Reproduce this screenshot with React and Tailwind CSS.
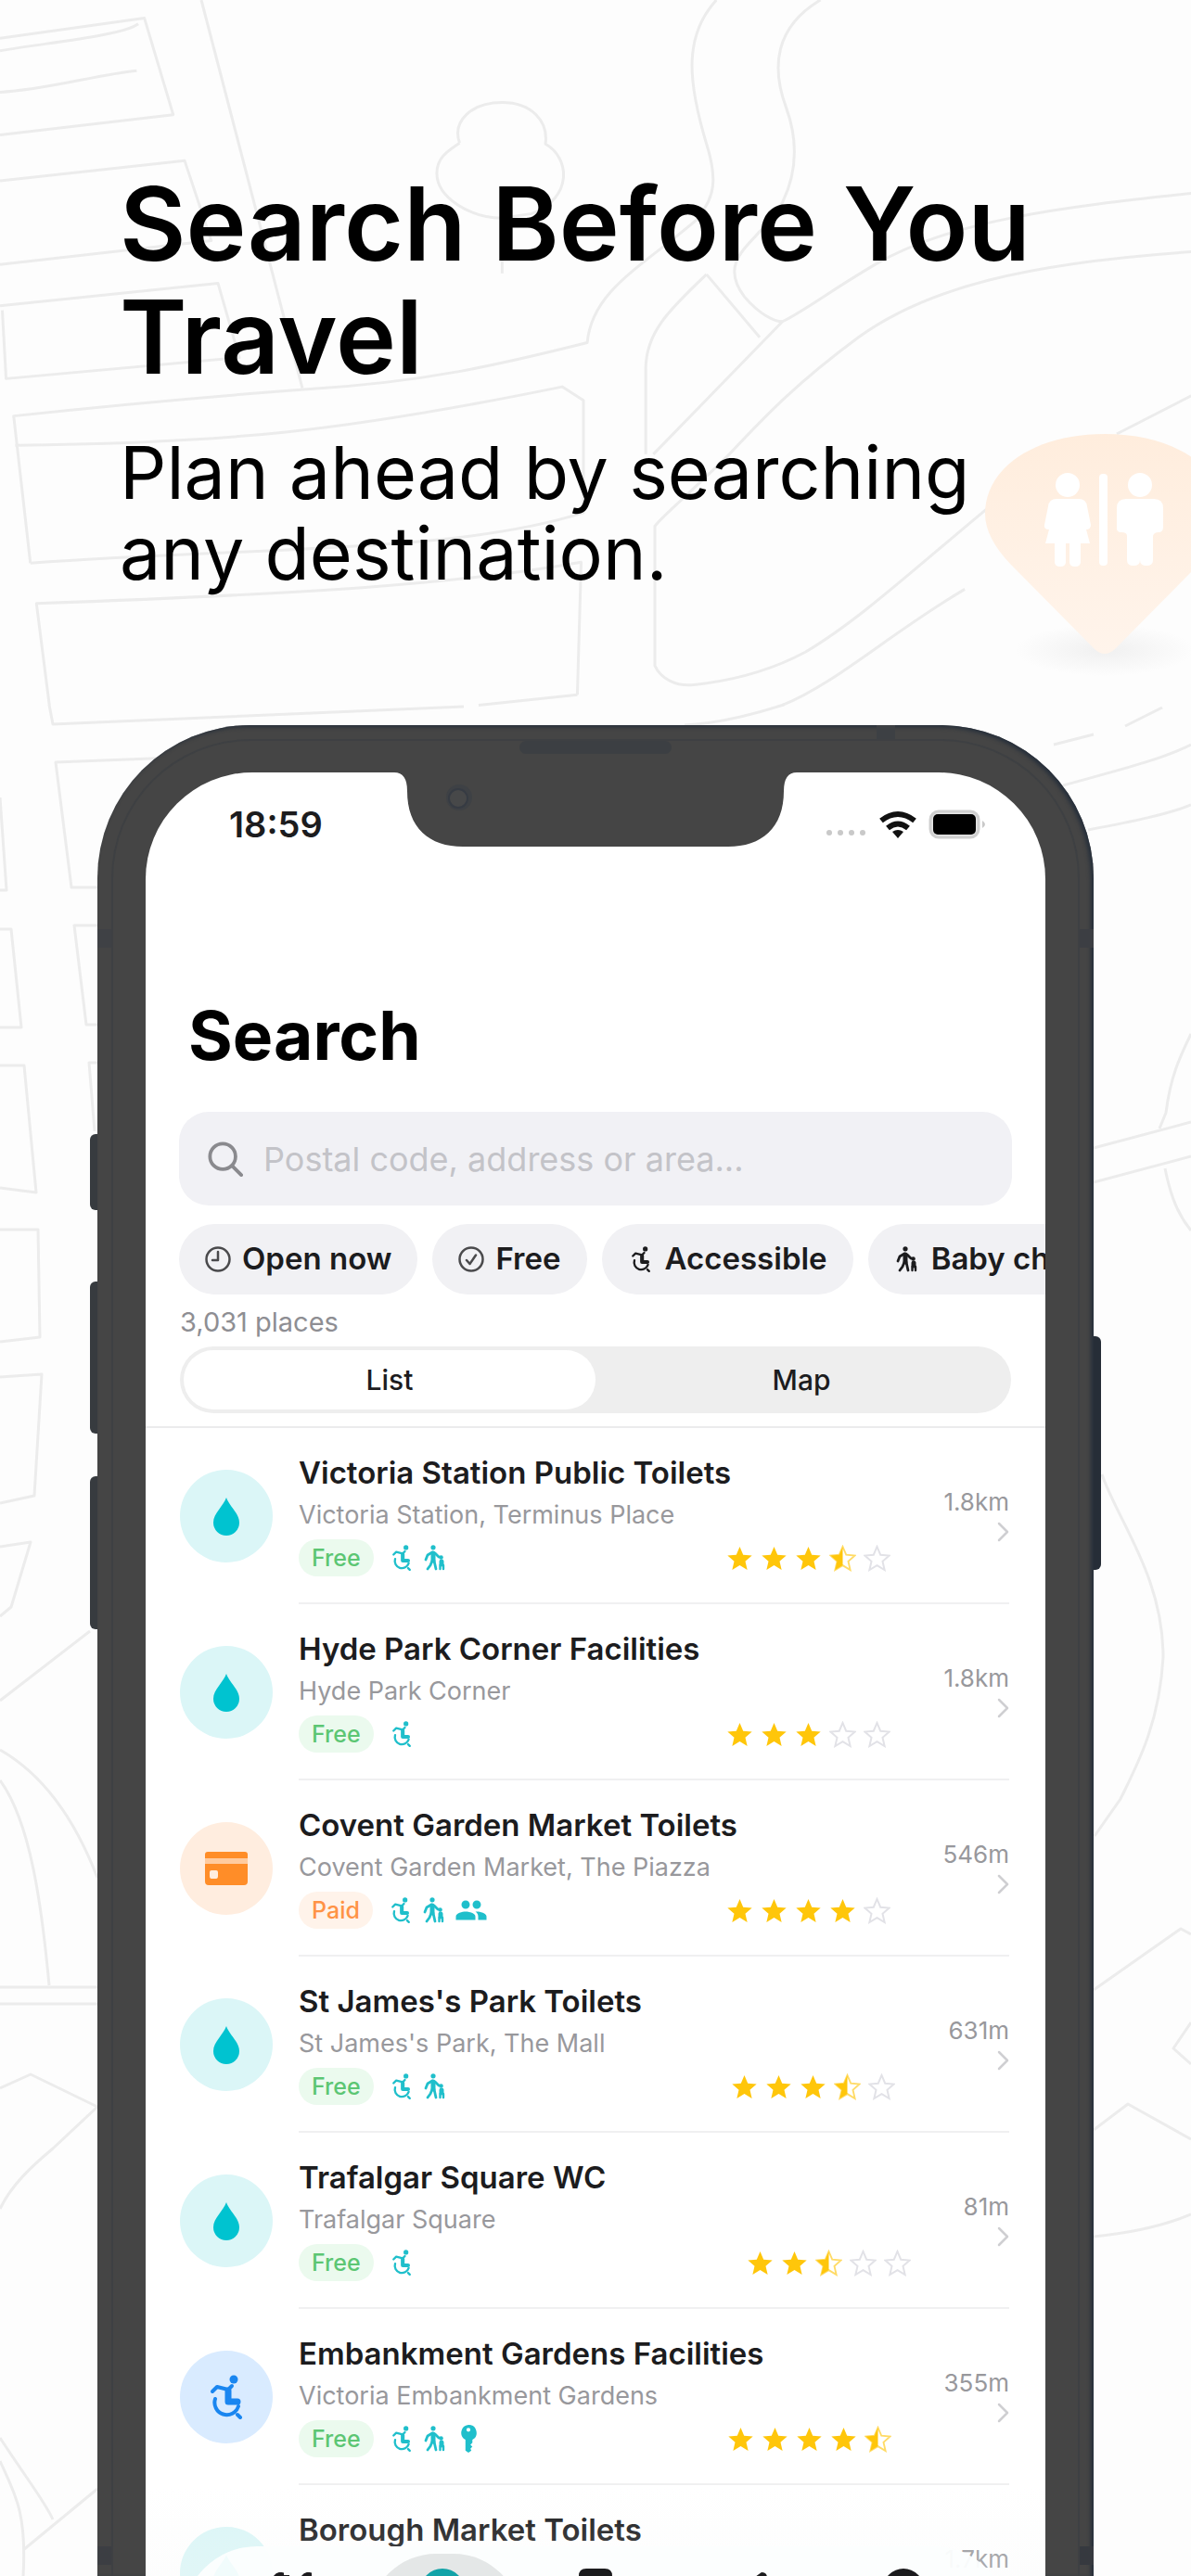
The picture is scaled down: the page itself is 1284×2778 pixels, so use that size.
import React from 'react';
import { MdPeople } from 'react-icons/md';

// Icons
const WheelchairIcon = ({ className }) => (
  <svg viewBox="0 0 36 48" className={className} fill="none" stroke="currentColor" strokeWidth="4" strokeLinecap="round" strokeLinejoin="round" aria-hidden="true">
    <circle cx="26" cy="5" r="4.500" fill="currentColor" stroke="none" />
    <path d="M3 18 8 13l12 3 4-4" />
    <path d="M20 17v12h10" strokeWidth="7" />
    <path d="M6 26a13 13 0 1 0 25 8" />
    <path d="m30 43 3 3" />
  </svg>
);

const ChildIcon = ({ className }) => (
  <svg viewBox="0 0 24 28" className={className} fill="none" stroke="currentColor" strokeWidth="2.800" strokeLinecap="round" strokeLinejoin="round" aria-hidden="true">
    <circle cx="10" cy="2.800" r="2.600" fill="currentColor" stroke="none" />
    <path d="M10 9v8" strokeWidth="5" />
    <path d="M9 8 4 11l-2 5M12 9l4 4M9 17l-2 5-3 4M11 17l2 9" />
    <circle cx="18.500" cy="13.500" r="2.300" fill="currentColor" stroke="none" />
    <path d="M19 18v3" strokeWidth="5" />
    <path d="M17.500 22v4M21 22v4" strokeWidth="2.400" />
  </svg>
);

const DropIcon = ({ className }) => (
  <svg viewBox="0 0 28 41" className={className} fill="currentColor" aria-hidden="true">
    <path d="M14 0c3 9 14 17 14 27a14 14 0 0 1-28 0C0 17 11 9 14 0Z" />
  </svg>
);

const KeyIcon = ({ className }) => (
  <svg viewBox="0 0 18 28" className={className} fill="currentColor" aria-hidden="true">
    <path
      fillRule="evenodd"
      d="M9 0a8 8 0 0 1 4 15v3l-2 2 2 2-2 2 1 2-3 2-3-2V15A8 8 0 0 1 9 0Zm0 3a2 2 0 1 0 0 4 2 2 0 0 0 0-4Z"
    />
  </svg>
);

const CardIcon = ({ className }) => (
  <svg viewBox="0 0 46 36" className={className} fill="currentColor" aria-hidden="true">
    <path d="M3 0h40q3 0 3 3v4H0V3q0-3 3-3Z" />
    <path d="M0 7h46v6H0Z" opacity=".35" />
    <path
      fillRule="evenodd"
      d="M0 13h46v19q0 4-4 4H4q-4 0-4-4V13Zm7 7q-2 0-2 2v4q0 3 2 3h5q2 0 2-3v-4q0-2-2-2H7Z"
    />
  </svg>
);

const ClockIcon = ({ className }) => (
  <svg viewBox="0 0 28 28" className={className} fill="none" stroke="currentColor" strokeWidth="2.500" strokeLinecap="round" strokeLinejoin="round" aria-hidden="true">
    <circle cx="14" cy="14" r="12.500" />
    <path d="M14 6v9H8" />
  </svg>
);

const CheckIcon = ({ className }) => (
  <svg viewBox="0 0 28 28" className={className} fill="none" stroke="currentColor" strokeWidth="2.500" strokeLinecap="round" strokeLinejoin="round" aria-hidden="true">
    <circle cx="14" cy="14" r="12.500" />
    <path d="m9 15 3.500 4L19 9.500" />
  </svg>
);

const SearchIcon = ({ className }) => (
  <svg viewBox="0 0 40 40" className={className} fill="none" stroke="currentColor" strokeWidth="4" strokeLinecap="round" aria-hidden="true">
    <circle cx="17" cy="17" r="14.500" />
    <path d="m28 28 10 10" />
  </svg>
);

const ChevronIcon = ({ className }) => (
  <svg viewBox="0 0 14 24" className={className} fill="none" stroke="currentColor" strokeWidth="2.500" strokeLinecap="round" strokeLinejoin="round" aria-hidden="true">
    <path d="m3 3 9 9-9 9" />
  </svg>
);

const STAR = 'M12 17.270 18.180 21l-1.640-7.030L22 9.240l-7.190-.610L12 2 9.190 8.630 2 9.240l5.460 4.730L5.820 21z';
const STAR_HALF = 'M12 17.270V2L9.190 8.630 2 9.240l5.460 4.730L5.820 21z';

const Star = ({ fill }) => (
  <svg viewBox="1 1 22 21" className="w-[29px] h-[29px]" aria-hidden="true">
    {fill === 1 && <path d={STAR} fill="#ffc60a" />}
    {fill === 0.5 && (
      <>
        <path d={STAR} fill="none" stroke="#ffdb66" strokeWidth="1.400" />
        <path d={STAR_HALF} fill="#ffc60a" />
      </>
    )}
    {fill === 0 && <path d={STAR} fill="none" stroke="#e2e2e7" strokeWidth="1.500" />}
  </svg>
);

const filters = [
  { label: 'Open now', icon: <ClockIcon className="w-7 h-7 text-[#4a4a4c]" /> },
  { label: 'Free', icon: <CheckIcon className="w-7 h-7 text-[#4a4a4c]" /> },
  { label: 'Accessible', icon: <WheelchairIcon className="w-7 h-7" /> },
  { label: 'Baby changing', icon: <ChildIcon className="w-7 h-7" /> },
];

const places = [
  { name: 'Victoria Station Public Toilets', address: 'Victoria Station, Terminus Place', distance: '1.8km', rating: 3.5, kind: 'water', amenities: ['wheelchair', 'child'] },
  { name: 'Hyde Park Corner Facilities', address: 'Hyde Park Corner', distance: '1.8km', rating: 3, kind: 'water', amenities: ['wheelchair'] },
  { name: 'Covent Garden Market Toilets', address: 'Covent Garden Market, The Piazza', distance: '546m', rating: 4, kind: 'card', amenities: ['wheelchair', 'child', 'people'] },
  { name: "St James's Park Toilets", address: "St James's Park, The Mall", distance: '631m', rating: 3.5, kind: 'water', amenities: ['wheelchair', 'child'] },
  { name: 'Trafalgar Square WC', address: 'Trafalgar Square', distance: '81m', rating: 2.5, kind: 'water', amenities: ['wheelchair'] },
  { name: 'Embankment Gardens Facilities', address: 'Victoria Embankment Gardens', distance: '355m', rating: 4.5, kind: 'access', amenities: ['wheelchair', 'child', 'key'] },
  { name: 'Borough Market Toilets', distance: '1.7km', kind: 'water' },
];

const kinds = {
  water: { bg: 'bg-[#dbf6f7]', icon: <DropIcon className="w-7 h-[41px] text-[#00c3d0]" /> },
  card: { bg: 'bg-[#ffeddf]', icon: <CardIcon className="w-[46px] h-9 text-[#ff8d28]" /> },
  access: { bg: 'bg-[#d9ebff]', icon: <WheelchairIcon className="w-9 h-12 text-[#1a86f0]" /> },
};

const amenityIcons = {
  wheelchair: <WheelchairIcon className="w-7 h-7" />,
  child: <ChildIcon className="w-7 h-7" />,
  people: <MdPeople className="w-9 h-9" />,
  key: <KeyIcon className="w-7 h-[30px]" />,
};

const topStreets = [
  'M0 85 190 40 228 255 0 300',
  'M0 113C60 95 160 80 182 53',
  'M0 205C60 200 130 165 180 157',
  'M265 0 398 863',
  'M0 402 243 357 278 535 0 588',
  'M3 690 8 842 315 795 287 630 0 680',
  'M605 318C595 270 620 228 661 228 700 228 722 270 718 320 750 350 755 440 700 475L661 485C620 485 575 440 575 385 575 350 590 335 605 318',
  'M661 485V608',
  'M943 0C900 80 905 180 930 320 945 400 940 440 920 480',
  'M1080 0C1020 60 1015 150 1035 240 1050 310 1050 380 1030 450 1000 540 940 570 980 660 1000 700 1020 715 1030 715',
  'M1568 430C1400 460 1250 490 1150 590 1090 650 1060 690 1030 715L860 1010',
  'M1568 560C1350 585 1220 640 1130 750 1050 850 1010 920 960 1010 900 1110 870 1150 862 1170V1480C870 1510 890 1525 910 1523 960 1515 1010 1495 1060 1450 1130 1380 1200 1270 1300 1130',
  'M930 610 1000 750',
  'M930 610C880 690 850 740 850 820V1010',
  'M930 470C850 590 780 640 773 762 660 810 560 850 400 866 250 885 100 910 18 925L40 1252',
  'M20 990C300 985 450 960 740 860L768 890V1140C600 1230 350 1215 40 1252',
  'M760 1545 765 1250C600 1300 400 1320 48 1342L65 1568',
  'M630 1568 760 1545',
  'M1568 880 1470 965',
  'M1030 1568C1100 1520 1170 1410 1270 1310',
];

const streets = [
  'M738 782C780 780 820 768 845 760',
  'M53 760 57 781 500 762',
  'M240 815 60 822 77 957H105',
  'M0 860 7 960H0M0 1002H12L23 1108H0M0 1149H26L39 1286 0 1281',
  'M105 998H80L93 1105H105M105 1146H96L102 1220',
  'M1136 803 1179 792M1213 783 1253 763',
  'M1146 847C1200 832 1250 820 1284 803',
  'M1173 895C1220 886 1260 878 1284 868',
  'M1284 1115C1272 1140 1262 1160 1257 1200L1250 1217M1256 1260C1262 1290 1270 1310 1284 1327',
  'M1179 1238 1284 1210M1179 1275 1284 1247',
  'M1188 1590C1205 1640 1254 1700 1254 1787 1250 1860 1225 1905 1208 1940L1180 1980',
  'M1179 2146 1273 2080 1284 2086M1284 2181 1265 2209 1284 2226',
  'M1179 2297 1216 2269 1284 2307M1179 2412C1230 2407 1260 2398 1284 2388',
  'M0 1326H41L43 1442 0 1447',
  'M0 1485 45 1482 37 1613 0 1621M0 1668 33 1663 12 1733 0 1743',
  'M0 1834 97 1759M0 1887C49 1915 82 1965 105 2025M0 1920C33 1965 45 2055 53 2141',
  'M0 2143H105M0 2161H105M0 2252 33 2237 105 2272 57 2317C33 2337 12 2357 0 2382',
  'M0 2629C33 2679 49 2699 57 2717M0 2654C16 2689 29 2709 25 2778M25 2750 105 2684',
];

// Faint street map behind everything
const MapBackground = () => (
  <svg
    viewBox="0 0 1284 2778"
    preserveAspectRatio="xMidYMin slice"
    className="absolute inset-0 w-full h-full"
    aria-hidden="true"
  >
    <defs>
      <linearGradient id="pin" x1="0" y1="0" x2="0" y2="1">
        <stop offset="0" stopColor="#ffeddd" />
        <stop offset="1" stopColor="#fff4eb" />
      </linearGradient>
      <radialGradient id="pinShadow">
        <stop offset="0" stopColor="#f0f0f0" />
        <stop offset="1" stopColor="#fdfdfd" />
      </radialGradient>
    </defs>
    <g fill="none" stroke="#ececec" strokeWidth="3" strokeLinejoin="round">
      <g transform="scale(0.819 0.485)">
        {topStreets.map((d) => (
          <path key={d} d={d} vectorEffect="non-scaling-stroke" />
        ))}
      </g>
      {streets.map((d) => (
        <path key={d} d={d} />
      ))}
    </g>
    <ellipse cx="1191" cy="701" rx="96" ry="28" fill="url(#pinShadow)" />
    <path
      d="M1191 468c-75 0-129 36-129 86 0 18 10 36 27 54l90 91q12 12 24 0l90-91c17-18 27-36 27-54 0-50-54-86-129-86Z"
      fill="url(#pin)"
    />
    <g fill="#fff">
      <circle cx="1151" cy="523" r="13" />
      <path d="M1139 538h24q8 0 9 8l4 20q0 5-5 5l4 15h-10v20q0 5-6 5t-6-5v-20h-4v20q0 5-6 5t-6-5v-20h-10l4-15q-6 0-5-5l4-20q1-8 9-8Z" />
      <rect x="1185" y="511" width="9" height="99" rx="4" />
      <circle cx="1229" cy="523" r="13" />
      <path d="M1214 538h30q10 0 10 10v20q0 6-5 6t-6 4v26q0 6-7 6t-7-6q0 6-7 6t-7-6v-26q0-4-6-4t-5-6v-20q0-10 10-10Z" />
    </g>
  </svg>
);

// Status bar glyphs
const StatusIcons = () => (
  <svg viewBox="0 0 178 32" className="w-[178px] h-8" aria-hidden="true">
    <g fill="#c9c9c9">
      <circle cx="5" cy="25" r="3" />
      <circle cx="17" cy="25" r="3" />
      <circle cx="29" cy="25" r="3" />
      <circle cx="41" cy="25" r="3" />
    </g>
    <g fill="none" stroke="#111" strokeWidth="6">
      <path d="M61 12q18-14 36 0" />
      <path d="M68 20q11-9 22 0" />
    </g>
    <path d="M73 24q6-4 12 0l-6 7Z" fill="#111" />
    <rect x="114" y="2" width="52" height="28" rx="9" fill="#e4e4e4" stroke="#cfcfcf" strokeWidth="3" />
    <rect x="117" y="5" width="46" height="22" rx="5" fill="#000" />
    <path d="M170 12q6 4 0 8Z" fill="#c8c8c8" />
  </svg>
);

const PlaceRow = ({ place }) => {
  const kind = kinds[place.kind];
  const paid = place.kind === 'card';
  return (
    <li>
      <a href="#place" className="flex items-center gap-7 pl-[37px] pr-[39px]">
        <div className={`flex items-center justify-center w-[100px] h-[100px] shrink-0 rounded-full ${kind.bg}`}>
          {kind.icon}
        </div>
        <div className="flex items-center gap-[57px] flex-1 min-w-0 h-[190px] border-b-2 border-[#f0f0f1]">
          <div className="flex flex-col gap-2 flex-1 min-w-0 h-[132px]">
            <h3 className="text-[33px] leading-10 font-semibold text-[#1c1c1e] truncate">{place.name}</h3>
            {place.address && (
              <p className="text-[27px] leading-9 text-[#98989c] truncate">{place.address}</p>
            )}
            {place.amenities && (
              <div className="flex items-center h-10">
                <span
                  className={`px-[14px] rounded-full text-[25px] leading-10 font-medium ${
                    paid ? 'bg-[#fff3ea] text-[#ff9346]' : 'bg-[#ebfaee] text-[#5cc673]'
                  }`}
                >
                  {paid ? 'Paid' : 'Free'}
                </span>
                <div className="flex items-center gap-2 ml-4 text-[#1fbfcb]">
                  {place.amenities.map((name) => (
                    <span key={name}>{amenityIcons[name]}</span>
                  ))}
                </div>
                <div className="flex gap-2 ml-auto" role="img" aria-label={`${place.rating} stars`}>
                  {[0, 1, 2, 3, 4].map((i) => (
                    <Star key={i} fill={Math.max(0, Math.min(1, place.rating - i))} />
                  ))}
                </div>
              </div>
            )}
          </div>
          <div className="flex flex-col items-end gap-1 text-[#98989c]">
            <span className="text-[26px] leading-8">{place.distance}</span>
            <ChevronIcon className="w-[14px] h-6 text-[#cfcfd2]" />
          </div>
        </div>
      </a>
    </li>
  );
};

const TabBar = () => (
  <nav className="absolute inset-x-0 -bottom-[168px] px-10 pt-16 pb-10 bg-gradient-to-b from-white/0 to-[#f4f6f6]/60">
    <div className="flex items-start justify-between h-[160px] px-[38px] rounded-full bg-[#fcfefe]/95 text-[#1c1c1e]">
      <button aria-label="Nearby" className="w-[168px] h-36 pt-7 flex justify-center">
        <svg viewBox="0 0 56 56" className="w-14 h-14" fill="none" stroke="currentColor" strokeWidth="6" aria-hidden="true">
          <path d="M6 12q4-10 9-9v40M21 3v40M36 12q4-10 9-9v40" />
        </svg>
      </button>
      <button aria-label="Search" className="w-[168px] h-36 mt-2 pt-4 flex justify-center rounded-full bg-[#e4e7e7]">
        <svg viewBox="0 0 56 56" className="w-14 h-14" fill="none" stroke="#12a3a8" strokeWidth="8" aria-hidden="true">
          <circle cx="26" cy="24" r="20" />
          <path d="m40 38 12 12" />
        </svg>
      </button>
      <button aria-label="Saved" className="w-[168px] h-36 pt-6 flex justify-center">
        <svg viewBox="0 0 56 56" className="w-14 h-14" fill="currentColor" aria-hidden="true">
          <path d="M18 0h20q8 0 8 8v48L28 40 10 56V8q0-8 8-8Z" />
        </svg>
      </button>
      <button aria-label="Add" className="w-[168px] h-36 pt-7 flex justify-center">
        <svg viewBox="0 0 56 56" className="w-14 h-14" fill="currentColor" aria-hidden="true">
          <path d="M44 0q6 0 6 6l-4 50H10Q14 20 44 0Z" />
        </svg>
      </button>
      <button aria-label="Profile" className="w-[168px] h-36 pt-6 flex justify-center">
        <svg viewBox="0 0 56 56" className="w-14 h-14" fill="currentColor" aria-hidden="true">
          <circle cx="34" cy="22" r="22" />
        </svg>
      </button>
    </div>
  </nav>
);

const Screen = () => (
  <div className="relative flex-1 min-h-0 overflow-hidden bg-white rounded-t-[115px]">
    {/* Notch */}
    <svg viewBox="0 0 434 80" className="absolute top-0 left-1/2 -translate-x-1/2 w-[434px] h-20" aria-hidden="true">
      <path d="M0 0q14 0 14 20c0 40 24 60 60 60h286c36 0 60-20 60-60q0-20 14-20Z" fill="#454545" />
      <circle cx="70" cy="27" r="14" fill="#3e4145" />
      <circle cx="69" cy="28" r="10" fill="#474849" stroke="#363b43" strokeWidth="2" />
    </svg>

    {/* Status bar */}
    <div className="flex items-center justify-between h-28 pl-[90px] pr-[60px]">
      <span className="text-[38px] leading-10 font-semibold text-[#1c1c1e]">18:59</span>
      <StatusIcons />
    </div>

    <h2 className="mt-[132px] pl-[46px] text-[73px] leading-[80px] font-bold text-black">Search</h2>

    <label className="flex items-center gap-[22px] h-[101px] mt-[42px] mx-9 px-[31px] rounded-[32px] bg-[#f1f1f5]">
      <SearchIcon className="w-[38px] h-[38px] shrink-0 text-[#8a8a8e]" />
      <input
        type="text"
        aria-label="Search places"
        placeholder="Postal code, address or area..."
        className="flex-1 min-w-0 bg-transparent outline-none text-[36px] leading-10 placeholder:text-[#c3c3c8]"
      />
    </label>

    {/* Filters */}
    <div className="flex gap-4 mt-5 pl-9 overflow-hidden">
      {filters.map((filter) => (
        <button
          key={filter.label}
          className="flex items-center gap-3 shrink-0 h-[76px] px-7 rounded-full bg-[#f1f1f4] text-[33px] font-semibold text-[#1c1c1e]"
        >
          {filter.icon}
          {filter.label}
        </button>
      ))}
    </div>

    <p className="mt-3 pl-[37px] text-[29px] leading-9 text-[#8e8e93]">3,031 places</p>

    <div className="flex mt-2 mb-3.5 mx-[37px] h-[72px] p-1 rounded-full bg-[#eeeeee] text-[30px] font-medium text-[#1c1c1e]">
      <button className="flex-1 rounded-full bg-white">List</button>
      <button className="flex-1 rounded-full">Map</button>
    </div>

    <ul className="border-t-2 border-[#ebebec]">
      {places.map((place) => (
        <PlaceRow key={place.name} place={place} />
      ))}
    </ul>

    <TabBar />
  </div>
);

const Phone = () => (
  <div className="relative flex flex-col flex-1 min-h-0 mt-[142px] mx-[105px]">
    {/* Side buttons */}
    <div className="absolute -left-2 top-[441px] w-2 h-[82px] rounded-l-md bg-[#373b3f]" />
    <div className="absolute -left-2 top-[600px] w-2 h-[164px] rounded-l-md bg-[#373b3f]" />
    <div className="absolute -left-2 top-[810px] w-2 h-[165px] rounded-l-md bg-[#373b3f]" />
    <div className="absolute -right-2 top-[659px] w-2 h-[252px] rounded-r-md bg-[#262d37]" />

    <div className="relative flex flex-col flex-1 min-h-0 px-[52px] pt-[51px] rounded-t-[165px] bg-[#454545] shadow-[inset_-3px_2px_4px_#262f3b]">
      {/* Frame seam and antenna bands */}
      <div className="absolute inset-x-[15px] top-[15px] bottom-0 rounded-t-[150px] border-2 border-b-0 border-[#3e4043]" />
      <div className="absolute left-0 top-[220px] w-[15px] h-5 bg-[#3f4145]" />
      <div className="absolute right-0 top-[220px] w-[15px] h-5 bg-[#3c3e43]" />
      <div className="absolute right-[214px] top-0 w-5 h-[15px] bg-[#3d4044]" />
      <div className="absolute left-0 bottom-3 w-[15px] h-5 bg-[#3c3e43]" />
      <div className="absolute right-0 bottom-3 w-[15px] h-5 bg-[#36393f]" />
      {/* Speaker */}
      <div className="absolute left-1/2 -translate-x-1/2 top-[17px] w-[164px] h-[14px] rounded-full bg-[#3c3f43]" />
      <Screen />
    </div>
  </div>
);

const App = () => (
  <div className="relative flex flex-col h-screen overflow-hidden bg-[#fdfdfd] font-['Inter',sans-serif] text-black">
    <MapBackground />
    <header className="relative pt-[180px] px-[129px]">
      <h1 className="text-[110px] leading-[122px] font-semibold">Search Before You Travel</h1>
      <p className="mt-[42px] text-[79px] leading-[87px]">Plan ahead by searching any destination.</p>
    </header>
    <Phone />
  </div>
);

export default App;
